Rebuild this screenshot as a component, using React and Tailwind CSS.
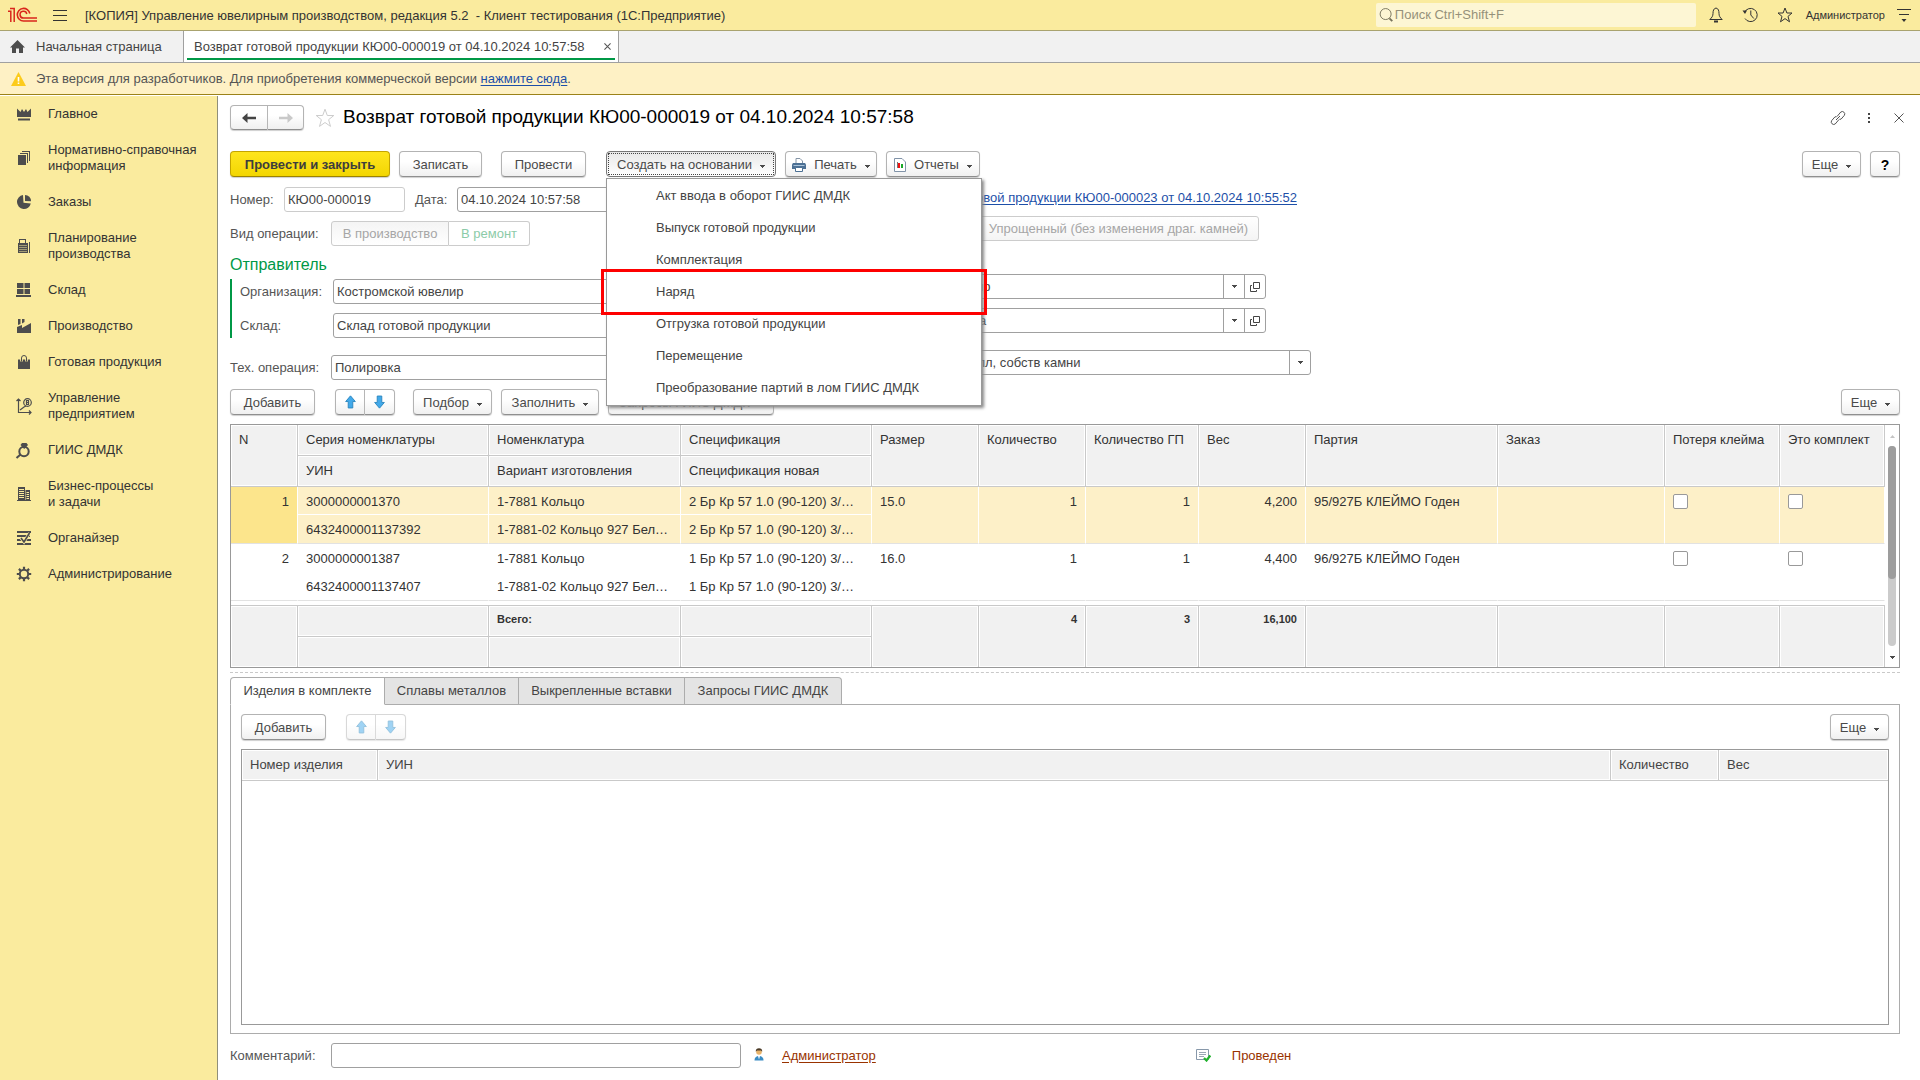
const F = "'Liberation Sans', Arial, sans-serif";

const BTN =
  "flex shrink-0 items-center justify-center border border-[#b3b3b3] border-b-[#8f8f8f] rounded-sm bg-linear-to-b from-white from-40% to-[#f0f0f0] shadow-[0_1px_1px_#cfcfcf] text-[#4a4a4a] whitespace-nowrap";
const FIELD =
  "h-[25px] border border-[#a0a0a0] rounded-[3px] bg-white px-[3px] text-[#444] outline-none min-w-0";

function Caret({ className = "" }) {
  return (
    <svg width="5" height="3" viewBox="0 0 5 3" className={"shrink-0 " + className} fill="#4a4a4a" shapeRendering="crispEdges">
      <path d="M0 0h5v1H4v1H3v1H2V2H1V1H0z" />
    </svg>
  );
}

function Button({ className = "", caret, children }) {
  return (
    <button type="button" className={BTN + " h-[26px] pt-px " + className}>
      {children}
      {caret && <Caret className="ml-2 mt-1" />}
    </button>
  );
}

function Arrow({ down }) {
  return (
    <svg width="11" height="14" viewBox="0 0 12 15" className={down ? "rotate-180" : ""}>
      <path d="M6 .8 11.3 7H8.500v7h-5V7H.7z" fill="#42a9ea" stroke="#2b86bd" strokeWidth="1" />
    </svg>
  );
}

function MoveButtons({ disabled }) {
  return (
    <div className={"flex shrink-0 " + (disabled ? "opacity-50" : "")}>
      <button type="button" disabled={disabled} aria-label="Вверх" className={BTN + " h-[26px] w-[30px] rounded-r-none"}>
        <Arrow />
      </button>
      <button type="button" disabled={disabled} aria-label="Вниз" className={BTN + " h-[26px] w-[30px] rounded-l-none border-l-0"}>
        <Arrow down />
      </button>
    </div>
  );
}

const G = "#4d4d4d";
const ICONS = {
  crown: (
    <g fill={G}>
      <path d="M1 2.500 4.500 6 6 3l2 3 2-3 1.500 3L15 2.500V11H1z" />
      <path d="M2 12.500h12v2H2z" />
    </g>
  ),
  docs: (
    <g fill={G}>
      <path d="M2 5h8v10H2z" />
      <path d="M4 3h8v10h-1V4H4zM6 1h8v10h-1V2H6z" />
    </g>
  ),
  pie: (
    <g fill={G}>
      <path d="M7 1a7 7 0 1 0 7.800 8.500L7.500 8.800z" />
      <path d="M9 1a6 6 0 0 1 6 6.200L9 7z" />
    </g>
  ),
  calc: (
    <g fill={G}>
      <path fillRule="evenodd" d="M3 1h7v4h2v10H2V5h1zm1 1v3h5V2zM3.500 7v1h1V7zm2 0v1h1V7zm2 0v1h1V7zm2 0v1h1V7zm-6 2v1h1V9zm2 0v1h1V9zm2 0v1h1V9zm2 0v1h1V9zm-6 2v1h1v-1zm2 0v1h1v-1zm2 0v1h1v-1zm2 0v1h1v-1zm-6 2v1h1v-1zm2 0v1h1v-1zm2 0v1h1v-1zm2 0v1h1v-1z" />
      <path d="M13 4h1v11h-1z" />
    </g>
  ),
  boxes: (
    <g fill={G}>
      <path d="M1 1h6.500v5H1zM8.500 1H14v5H8.500zM1 7h6.500v5H1zM8.500 7H14v5H8.500zM0 13h15v2H0z" />
    </g>
  ),
  factory: (
    <g fill={G}>
      <path d="M1 15V9l5-2v3l9-5v10z" />
      <path d="M2 1h2.500v5L2 7zM6 1h2.500v3L6 5.500z" />
    </g>
  ),
  bag: (
    <g>
      <path d="M2 5.500h12V15H2z" fill={G} />
      <path d="M5.500 7.500V4a2.500 2.500 0 0 1 5 0v3.500" fill="none" stroke="#faeb9e" strokeWidth="2.600" />
      <path d="M5.500 7.500V4a2.500 2.500 0 0 1 5 0v3.500" fill="none" stroke={G} strokeWidth="1" />
    </g>
  ),
  chart: (
    <g fill="none" stroke={G} strokeWidth="1.200">
      <path d="M2.500 1v13.500H15M.5 3l2-2 2 2M13 12.500l2 2-2 2M4 12l4-3 2-1" />
      <circle cx="11.500" cy="4.500" r="3.800" />
      <path d="M10.500 2.500h2v4h-2zM10.500 4.500h2" />
    </g>
  ),
  ring: (
    <g fill="none" stroke={G} strokeWidth="2">
      <circle cx="8" cy="9.500" r="4.700" />
      <path d="M4.500 12.500.5 16" />
      <path d="M6 1h4.500l1.500 2-3.800 4L4.500 3z" fill={G} stroke="none" />
    </g>
  ),
  building: (
    <g fill={G}>
      <path fillRule="evenodd" d="M2 1h7v14H2zm1 2v1h5V3zm0 2v1h5V5zm0 2v1h5V7zm0 2v1h5V9zm0 2v1h5v-1zM9.500 4H14v11H9.500zm1 2v1H13V6zm0 2v1H13V8zm0 2v1H13v-1zm0 2v1H13v-1z" />
      <path d="M1 14h14v1H1z" />
    </g>
  ),
  organizer: (
    <g fill={G}>
      <path d="M1 1h14v2H1zM1 5h13v2H1zM1 9h14v2H1zM1 13h14v2H1z" />
      <path d="M13.500 3 8 12 5 8" fill="none" stroke="#faeb9e" strokeWidth="3" />
      <path d="M13.500 3 8 12 5 8" fill="none" stroke={G} strokeWidth="1.600" />
    </g>
  ),
  gear: (
    <g stroke={G} fill="none">
      <circle cx="8" cy="8" r="4.200" strokeWidth="2" />
      <path strokeWidth="2.200" d="M8 .8v3M8 12.200v3M.8 8h3M12.200 8h3M2.900 2.900 5 5M11 11l2.100 2.100M13.100 2.900 11 5M5 11l-2.100 2.100" />
    </g>
  ),
};

const NAV = [
  ["crown", "Главное"],
  ["docs", "Нормативно-справочная", "информация"],
  ["pie", "Заказы"],
  ["calc", "Планирование", "производства"],
  ["boxes", "Склад"],
  ["factory", "Производство"],
  ["bag", "Готовая продукция"],
  ["chart", "Управление", "предприятием"],
  ["ring", "ГИИС ДМДК"],
  ["building", "Бизнес-процессы", "и задачи"],
  ["organizer", "Органайзер"],
  ["gear", "Администрирование"],
];

function Header() {
  return (
    <header className="flex h-[31px] shrink-0 items-center border-b border-[#a9a36f] bg-[#faeb9e] text-[#333]">
      <svg width="30" height="16" viewBox="0 0 30 16" className="ml-2" fill="none" stroke="#d9261c">
        <path strokeWidth="1.500" d="M0 4.200h2.800V15M2 1.500h4.200V15" />
        <path strokeWidth="1.600" d="M21.800 6.500A6.300 6.300 0 1 0 15.500 14H29" />
        <path strokeWidth="1.500" d="M18.800 7A3.400 3.400 0 1 0 15.500 11H29" />
      </svg>
      <button type="button" aria-label="Меню" className="ml-[15px]">
        <svg width="14" height="11" viewBox="0 0 14 11" fill="#333">
          <path d="M0 0h14v1H0zM0 5h14v1H0zM0 10h14v1H0z" />
        </svg>
      </button>
      <span className="ml-[18px] pt-px whitespace-pre">
        [КОПИЯ] Управление ювелирным производством, редакция 5.2{"  "}- Клиент тестирования (1С:Предприятие)
      </span>
      <label className="ml-auto flex h-6 w-80 items-center rounded-xs bg-[#fdf6d4] px-[3px]">
        <svg width="15" height="16" viewBox="0 0 15 16" fill="none" stroke="#77735c">
          <circle cx="7" cy="7" r="5.800" />
          <path strokeWidth="2" d="m11 11.500 3 3" />
        </svg>
        <input aria-label="Поиск" placeholder="Поиск Ctrl+Shift+F" className="ml-0.5 w-full bg-transparent outline-none placeholder:text-[#95917a]" />
      </label>
      <button type="button" aria-label="Уведомления" className="ml-[13px]">
        <svg width="14" height="16" viewBox="0 0 14 16" fill="none" stroke="#333">
          <path d="M7 1C4.500 1.500 4 4 4 6.500 4 9 3 10.500.8 12.500h12.400C11 10.500 10 9 10 6.500 10 4 9.500 1.500 7 1z" />
          <path d="M5 14.500h4" strokeWidth="2" />
        </svg>
      </button>
      <button type="button" aria-label="История" className="ml-[19px]">
        <svg width="17" height="16" viewBox="0 0 17 16" fill="none" stroke="#333">
          <path d="M2.500 5.500A6.600 6.600 0 1 1 3 11.500M8.800 3.500V8l3 3.500" />
          <path d="M.5 3.500h4.500L3 7z" fill="#333" stroke="none" />
        </svg>
      </button>
      <button type="button" aria-label="Избранное" className="ml-[18px]">
        <svg width="16" height="16" viewBox="0 0 16 16" fill="none" stroke="#333">
          <path d="m8 1 1.900 5H15l-4 3.400 1.500 5.400L8 11.600l-4.500 3.200L5 9.400 1 6h5.100z" />
        </svg>
      </button>
      <span className="ml-[13px] text-[11px]">Администратор</span>
      <button type="button" aria-label="Настройки" className="mr-[9px] ml-3">
        <svg width="14" height="13" viewBox="0 0 14 13" fill="#333">
          <path d="M0 0h14v1H0zM2 5h10v1H2zM4.500 10h5L7 13z" />
        </svg>
      </button>
    </header>
  );
}

function Tabs() {
  return (
    <nav className="flex h-8 shrink-0 border-b border-[#a0a0a0] bg-[#f1f1f1] text-[#444]">
      <a href="#home" className="flex w-[184px] items-center border-r border-[#a0a0a0] pl-2.5">
        <svg width="15" height="13" viewBox="0 0 15 13" fill={G}>
          <path d="M7.500 0 15 7.500h-2V13H9V8.500H6V13H2V7.500H0z" />
        </svg>
        <span className="ml-[11px]">Начальная страница</span>
      </a>
      <div className="flex w-[435px] border-r border-[#a0a0a0] bg-white px-[3px]">
        <div className="mb-0.5 flex flex-1 items-center justify-between border-b-2 border-[#009846] pt-1 pr-1 pl-[7px]">
          <span>Возврат готовой продукции КЮ00-000019 от 04.10.2024 10:57:58</span>
          <button type="button" aria-label="Закрыть вкладку">
            <svg width="7" height="7" viewBox="0 0 8 8" stroke="#555" strokeWidth="1.200">
              <path d="m.5.5 7 7m0-7-7 7" />
            </svg>
          </button>
        </div>
      </div>
    </nav>
  );
}

function Sidebar() {
  return (
    <nav className="w-[218px] shrink-0 border-r border-[#8f8f7a] bg-[#faeb9e] text-[#333]">
      {NAV.map(([icon, a, b]) => (
        <a key={icon} href={"#" + icon} className="flex items-center py-2.5 pl-4 leading-4">
          <svg width="16" height="16" viewBox="0 0 16 16" className="overflow-visible">
            {ICONS[icon]}
          </svg>
          <span className="ml-4">
            {a}
            {b && (
              <>
                <br />
                {b}
              </>
            )}
          </span>
        </a>
      ))}
    </nav>
  );
}

const MENU = [
  "Акт ввода в оборот ГИИС ДМДК",
  "Выпуск готовой продукции",
  "Комплектация",
  "Наряд",
  "Отгрузка готовой продукции",
  "Перемещение",
  "Преобразование партий в лом ГИИС ДМДК",
];

function CreateMenu() {
  return (
    <div className="absolute top-[27px] left-0 z-10 w-[376px] border border-[#999] bg-white py-px shadow-[2px_2px_3px_#888]">
      {MENU.map((m) => (
        <div key={m} className="relative">
          <button type="button" className="flex h-8 w-full items-center pl-[49px] text-[#444]">
            {m}
          </button>
          {m === "Наряд" && <div className="pointer-events-none absolute -inset-x-1.5 -top-[7px] -bottom-[7px] border-3 border-[#fe0000]" />}
        </div>
      ))}
    </div>
  );
}

function Toolbar() {
  return (
    <div className="flex">
      <button
        type="button"
        className="h-[26px] w-40 shrink-0 rounded-sm border border-[#c4a400] border-b-[#9c8300] bg-linear-to-b from-[#ffe51c] to-[#f3d600] pt-px font-bold whitespace-nowrap text-[#3d3d3d] shadow-[0_1px_1px_#cfcfcf]"
      >
        Провести и закрыть
      </button>
      <Button className="ml-[9px] w-[83px]">Записать</Button>
      <Button className="ml-[19px] w-[85px]">Провести</Button>
      <div className="relative ml-5">
        <button
          type="button"
          className="flex h-[26px] w-[170px] items-center justify-center rounded-sm border border-[#777] bg-linear-to-b from-[#e8e8e8] to-white p-px whitespace-nowrap text-[#4a4a4a]"
        >
          <span className="flex size-full items-center justify-center border border-dotted border-[#444] pt-px">
            Создать на основании
            <Caret className="ml-2 mt-1" />
          </span>
        </button>
        <CreateMenu />
      </div>
      <Button className="ml-[9px] w-[92px]" caret>
        <svg width="14" height="14" viewBox="0 0 14 14" className="mr-2">
          <path d="M4 6V.5h4L10.500 3v3" fill="#fff" stroke="#8494a5" />
          <path d="M0 6.500 1 5h12l1 1.500V11H0z" fill="#4c7094" />
          <path d="M1.500 7h11v1h-11z" fill="#a9c3da" />
          <path d="M3.500 9.500h7v4h-7z" fill="#fff" stroke="#4c7094" />
        </svg>
        Печать
      </Button>
      <Button className="ml-[9px] w-[94px]" caret>
        <svg width="12" height="14" viewBox="0 0 12 14" className="mr-2">
          <path d="M.5.5H8L11.500 4v9.500H.5z" fill="#fff" stroke="#8193a8" />
          <path d="M3 4h1v6H3z" fill="#777" />
          <path d="M4 5h2v5H4z" fill="#f01010" />
          <path d="M7 6h2v4H7z" fill="#18a828" />
        </svg>
        Отчеты
      </Button>
      <Button className="ml-auto w-[59px]" caret>Еще</Button>
      <Button className="ml-[9px] w-[30px] text-sm font-bold text-black">?</Button>
    </div>
  );
}

function Combo({ label, value, className, open }) {
  return (
    <div className={"flex h-[25px] overflow-hidden rounded-[3px] border border-[#a0a0a0] bg-white " + className}>
      <input aria-label={label} defaultValue={value} className="min-w-0 flex-1 px-[3px] text-[#444] outline-none" />
      <button type="button" aria-label={label + ": выбрать"} className="flex w-[21px] items-center justify-center border-l border-[#a0a0a0]">
        <Caret />
      </button>
      {open && (
        <button type="button" aria-label={label + ": открыть"} className="flex w-[21px] items-center justify-center border-l border-[#a0a0a0]">
          <svg width="10" height="10" viewBox="0 0 10 10" fill="none" stroke="#444">
            <path d="M3.500.5h6v6h-6zM2 3.500H.5v6h6V8" />
          </svg>
        </button>
      )}
    </div>
  );
}

function LeftForm() {
  return (
    <div className="w-[600px] shrink-0 text-[#555]">
      <div className="flex items-center">
        <label htmlFor="num" className="w-[54px]">Номер:</label>
        <input id="num" defaultValue="КЮ00-000019" className={FIELD + " w-[121px] border-[#ccc]"} />
        <label htmlFor="date" className="ml-2.5 w-[42px]">Дата:</label>
        <input id="date" defaultValue="04.10.2024 10:57:58" className={FIELD + " w-[170px]"} />
      </div>
      <div className="mt-[9px] flex items-center">
        <span className="w-[101px]">Вид операции:</span>
        <button type="button" disabled className="h-[25px] w-[118px] rounded-l-[3px] border border-[#ccc] bg-linear-to-b from-[#f4f4f4] to-white text-[#a6a6a6]">
          В производство
        </button>
        <button type="button" disabled className="h-[25px] w-[81px] rounded-r-[3px] border border-l-0 border-[#ccc] bg-white text-[#8ccba8]">
          В ремонт
        </button>
      </div>
      <h2 className="mt-[9px] text-base leading-5 text-[#009846]">Отправитель</h2>
      <div className="mt-1 flex flex-col gap-[9px] border-l-2 border-[#009846] pl-2">
        <div className="flex items-center">
          <label htmlFor="org" className="w-[93px]">Организация:</label>
          <input id="org" defaultValue="Костромской ювелир" className={FIELD + " w-[400px]"} />
        </div>
        <div className="flex items-center">
          <label htmlFor="wh" className="w-[93px]">Склад:</label>
          <input id="wh" defaultValue="Склад готовой продукции" className={FIELD + " w-[400px]"} />
        </div>
      </div>
      <div className="mt-[17px] flex items-center">
        <label htmlFor="op" className="w-[101px]">Тех. операция:</label>
        <input id="op" defaultValue="Полировка" className={FIELD + " w-[400px]"} />
      </div>
    </div>
  );
}

function RightForm() {
  return (
    <div className="flex w-[481px] shrink-0 flex-col text-[#444]">
      <a href="#base" className="mt-[3px] mr-3.5 self-end text-[#1d4fa8] underline underline-offset-2">
        Передача готовой продукции КЮ00-000023 от 04.10.2024 10:55:52
      </a>
      <button type="button" disabled className="mt-2.5 mr-[52px] h-[25px] self-end rounded-[3px] border border-[#ccc] bg-linear-to-b from-white to-[#f4f4f4] px-2.5 text-[#a6a6a6]">
        Упрощенный (без изменения драг. камней)
      </button>
      <Combo label="Получатель" value="ЗАО Костромской ювелир" open className="mt-[33px] w-[436px]" />
      <Combo label="Склад получателя" value="Склад литейного участка" open className="mt-[9px] w-[436px]" />
      <Combo label="Вид металла" value="Давальческий драгметалл, собств камни" className="mt-[17px]" />
    </div>
  );
}

const TH = "border-r border-b border-[#c9c9c9] bg-[#f1f1f1] shadow-[inset_0_0_0_1px_#fff] px-2 text-left align-top whitespace-nowrap";
const HEAD = TH + " pt-[7px] font-normal";
const COLS = ["w-[67px]", "w-[191px]", "w-[192px]", "w-[191px]", "w-[107px]", "w-[107px]", "w-[113px]", "w-[107px]", "w-[192px]", "", "w-[115px]", "w-[105px]"];

const ROWS = [
  { n: 1, ser: "3000000001370", uin: "6432400001137392", sp: "2 Бр Кр 57 1.0 (90-120) 3/…", size: "15.0", w: "4,200", p: "95/927Б КЛЕЙМО Годен", sel: true },
  { n: 2, ser: "3000000001387", uin: "6432400001137407", sp: "1 Бр Кр 57 1.0 (90-120) 3/…", size: "16.0", w: "4,400", p: "96/927Б КЛЕЙМО Годен", sel: false },
];

function ItemRows({ r }) {
  const td = "border-r border-b border-white px-2 pt-[7px] align-top whitespace-nowrap " + (r.sel ? "bg-[#fdf0c8]" : "");
  const low = td + " border-b-[#e2e2e2]";
  const check = (label) => (
    <input type="checkbox" aria-label={label} className="block size-[15px] appearance-none rounded-xs border border-[#999] bg-white" />
  );
  return (
    <>
      <tr className="h-[28px]">
        <td rowSpan={2} className={"border-r border-b border-white border-b-[#e2e2e2] px-2 pt-[7px] text-right align-top " + (r.sel ? "bg-[#fce58c]" : "")}>{r.n}</td>
        <td className={td}>{r.ser}</td>
        <td className={td}>1-7881 Кольцо</td>
        <td className={td}>{r.sp}</td>
        <td rowSpan={2} className={low}>{r.size}</td>
        <td rowSpan={2} className={low + " text-right"}>1</td>
        <td rowSpan={2} className={low + " text-right"}>1</td>
        <td rowSpan={2} className={low + " text-right"}>{r.w}</td>
        <td rowSpan={2} className={low}>{r.p}</td>
        <td rowSpan={2} className={low}></td>
        <td rowSpan={2} className={low}>{check("Потеря клейма")}</td>
        <td rowSpan={2} className={low}>{check("Это комплект")}</td>
      </tr>
      <tr className="h-[29px]">
        <td className={low}>{r.uin}</td>
        <td className={low}>1-7881-02 Кольцо 927 Бел…</td>
        <td className={low}>{r.sp}</td>
      </tr>
    </>
  );
}

function ItemsTable() {
  const foot = TH + " pt-[5px] text-[11px] font-bold";
  return (
    <div className="mt-[9px] flex border border-[#999] text-[#333]">
      <div className="min-w-0 flex-1">
        <table className="w-full table-fixed border-separate border-spacing-0">
          <colgroup>
            {COLS.map((c, i) => (
              <col key={i} className={c} />
            ))}
          </colgroup>
          <thead>
            <tr className="h-[31px]">
              <th rowSpan={2} className={HEAD}>N</th>
              <th className={HEAD}>Серия номенклатуры</th>
              <th className={HEAD}>Номенклатура</th>
              <th className={HEAD}>Спецификация</th>
              {["Размер", "Количество", "Количество ГП", "Вес", "Партия", "Заказ", "Потеря клейма", "Это комплект"].map((t) => (
                <th key={t} rowSpan={2} className={HEAD}>{t}</th>
              ))}
            </tr>
            <tr className="h-[31px]">
              <th className={HEAD}>УИН</th>
              <th className={HEAD}>Вариант изготовления</th>
              <th className={HEAD}>Спецификация новая</th>
            </tr>
          </thead>
          <tbody>
            {ROWS.map((r) => (
              <ItemRows key={r.n} r={r} />
            ))}
          </tbody>
        </table>
        <table className="mt-1 w-full table-fixed border-separate border-spacing-0 border-t border-[#c9c9c9]">
          <colgroup>
            {COLS.map((c, i) => (
              <col key={i} className={c} />
            ))}
          </colgroup>
          <tbody>
            <tr className="h-[31px]">
              <td rowSpan={2} className={foot + " border-b-0"}></td>
              <td className={foot}></td>
              <td className={foot}>Всего:</td>
              <td className={foot}></td>
              {["", "4", "3", "16,100", "", "", "", ""].map((t, i) => (
                <td key={i} rowSpan={2} className={foot + " border-b-0"}>
                  <div className="text-right">{t}</div>
                </td>
              ))}
            </tr>
            <tr className="h-[30px]">
              <td className={foot + " border-b-0"}></td>
              <td className={foot + " border-b-0"}></td>
              <td className={foot + " border-b-0"}></td>
            </tr>
          </tbody>
        </table>
      </div>
      <div className="flex w-3.5 flex-col items-center bg-white pt-2.5 pb-2">
        <svg width="5" height="3" viewBox="0 0 5 3" fill="#c4c4c4">
          <path d="M0 3h5L2.500 0z" />
        </svg>
        <div className="mt-2 w-2 flex-1 rounded-full bg-[#cbcbcb]">
          <div className="h-2/3 rounded-full bg-[#9d9d9d]" />
        </div>
        <Caret className="mt-2.5" />
      </div>
    </div>
  );
}

function Details() {
  const off = "border-l-0 bg-[#e4e4e4]";
  return (
    <section className="mt-1 flex min-h-0 flex-1 flex-col border-t border-dashed border-[#c9c9c9] pt-1">
      <div role="tablist" className="relative z-1 -mb-px flex text-[#444]">
        {[
          ["Изделия в комплекте", "w-[155px] bg-white border-b-white rounded-tl-sm"],
          ["Сплавы металлов", "w-[134px] " + off],
          ["Выкрепленные вставки", "w-[166px] " + off],
          ["Запросы ГИИС ДМДК", "w-[157px] rounded-tr-sm " + off],
        ].map(([t, c], i) => (
          <button key={t} type="button" role="tab" aria-selected={i === 0} className={"h-7 border border-[#acacac] whitespace-nowrap " + c}>
            {t}
          </button>
        ))}
      </div>
      <div className="flex min-h-0 flex-1 flex-col border border-[#acacac] px-2.5 pt-[9px] pb-2">
        <div className="flex">
          <Button className="w-[85px]">Добавить</Button>
          <div className="ml-5">
            <MoveButtons disabled />
          </div>
          <Button className="ml-auto w-[59px]" caret>Еще</Button>
        </div>
        <div className="mt-[9px] flex-1 border border-[#999] text-[#444]">
          <table className="w-full table-fixed border-separate border-spacing-0">
            <thead>
              <tr className="h-[31px]">
                <th className={HEAD + " w-[136px]"}>Номер изделия</th>
                <th className={HEAD}>УИН</th>
                <th className={HEAD + " w-[108px]"}>Количество</th>
                <th className={HEAD + " w-[169px] border-r-0"}>Вес</th>
              </tr>
            </thead>
          </table>
        </div>
      </div>
    </section>
  );
}

function Footer() {
  return (
    <footer className="mt-[9px] mb-3 flex items-center text-[#555]">
      <label htmlFor="comment" className="w-[101px]">Комментарий:</label>
      <input id="comment" className={FIELD + " w-[410px]"} />
      <svg width="10" height="13" viewBox="0 0 10 13" className="mb-0.5 ml-[13px]">
        <path d="M.5 12.500C.5 9.500 2 8 5 8s4.500 1.500 4.500 4.500z" fill="#3a8cc4" />
        <path d="m4 8 1 3.500L6 8z" fill="#fff" />
        <circle cx="5" cy="4" r="2.800" fill="#e8b36a" />
        <path d="M1.800 3.800C1.500 1.300 3 .3 5 .3s3.500 1 3.200 3.500L7 2.500H3z" fill="#4b3a26" />
      </svg>
      <a href="#user" className="ml-[18px] text-[#993300] underline underline-offset-2">Администратор</a>
      <svg width="15" height="13" viewBox="0 0 15 13" className="ml-[320px]">
        <path d="M.5.5h12v10H.5z" fill="#fff" stroke="#8798aa" />
        <path d="M3 3.500h7M3 5.500h7M3 7.500h5" stroke="#9aa7b5" />
        <path d="m8 9 2.500 2.500L14.300 6.500" fill="none" stroke="#22b22e" strokeWidth="2.200" />
      </svg>
      <span className="ml-[21px] text-[#993300]">Проведен</span>
    </footer>
  );
}

export default function App() {
  return (
    <div className="flex min-h-screen flex-col bg-white text-[13px] leading-4" style={{ fontFamily: F }}>
      <Header />
      <Tabs />
      <div className="flex h-8 shrink-0 items-center border-b border-[#9b8219] bg-[#fef1c5] pl-[11px] text-[#555]">
        <svg width="15" height="14" viewBox="0 0 15 14">
          <path d="M7.500 0 15 14H0z" fill="#fccb1c" />
          <path d="M6.700 5h1.600v4.500H6.700zM6.700 10.500h1.600V12H6.700z" fill="#fff" />
        </svg>
        <span className="ml-2.5">
          Эта версия для разработчиков. Для приобретения коммерческой версии{" "}
          <a href="#buy" className="text-[#1d4fa8] underline underline-offset-2">нажмите сюда</a>.
        </span>
      </div>
      <div className="mt-px flex flex-1">
        <Sidebar />
        <main className="flex min-w-0 flex-1 flex-col pt-[9px] pr-5 pl-3">
          <div className="flex items-center">
            <div className="flex">
              <button type="button" aria-label="Назад" className={BTN + " h-[25px] w-[38px] rounded-r-none"}>
                <svg width="14" height="10" viewBox="0 0 14 10" fill="#444">
                  <path d="M5.500 0v3.800H14v2.400H5.500V10L0 5z" />
                </svg>
              </button>
              <button type="button" aria-label="Вперед" className={BTN + " h-[25px] w-9 rounded-l-none border-l-0"}>
                <svg width="14" height="10" viewBox="0 0 14 10" fill="#c9c9c9" className="rotate-180">
                  <path d="M5.500 0v3.800H14v2.400H5.500V10L0 5z" />
                </svg>
              </button>
            </div>
            <button type="button" aria-label="В избранное" className="ml-[11px]">
              <svg width="20" height="20" viewBox="0 0 20 20" fill="none" stroke="#cdcdcd">
                <path d="m10 1.200 2.300 6.300h6.500l-5.200 4.200 1.900 6.700L10 14.500l-5.500 3.900 1.900-6.700L1.200 7.500h6.500z" />
              </svg>
            </button>
            <h1 className="ml-2 pb-0.5 text-[19px] leading-[22px] text-black">Возврат готовой продукции КЮ00-000019 от 04.10.2024 10:57:58</h1>
            <button type="button" aria-label="Ссылка" className="ml-auto">
              <svg width="16" height="16" viewBox="0 0 16 16" fill="none" stroke="#555">
                <path d="M7 6.500 10.800 2a2.500 2.500 0 0 1 3.600 3.300L11 9.200H9.500M9 9.500 5.200 14a2.500 2.500 0 0 1-3.600-3.300L5 6.800h1.500M6 10l4-4" />
              </svg>
            </button>
            <button type="button" aria-label="Еще действия" className="ml-[22px]">
              <svg width="2" height="12" viewBox="0 0 2 12" fill="#444">
                <path d="M0 1h2v2H0zM0 5h2v2H0zM0 9h2v2H0z" />
              </svg>
            </button>
            <button type="button" aria-label="Закрыть" className="-mr-1 ml-6">
              <svg width="10" height="10" viewBox="0 0 10 10" stroke="#555">
                <path d="m.5.5 9 9m0-9-9 9" />
              </svg>
            </button>
          </div>
          <div className="mt-[21px]">
            <Toolbar />
          </div>
          <div className="mt-2.5 flex">
            <LeftForm />
            <RightForm />
          </div>
          <div className="mt-[9px] flex">
            <Button className="w-[85px]">Добавить</Button>
            <div className="ml-5">
              <MoveButtons />
            </div>
            <Button className="ml-[18px] w-[79px]" caret>Подбор</Button>
            <Button className="ml-[9px] w-[98px]" caret>Заполнить</Button>
            <Button className="ml-[9px] w-[166px]" caret>Запросы ГИИС ДМДК</Button>
            <Button className="ml-auto w-[59px]" caret>Еще</Button>
          </div>
          <ItemsTable />
          <Details />
          <Footer />
        </main>
      </div>
    </div>
  );
}
